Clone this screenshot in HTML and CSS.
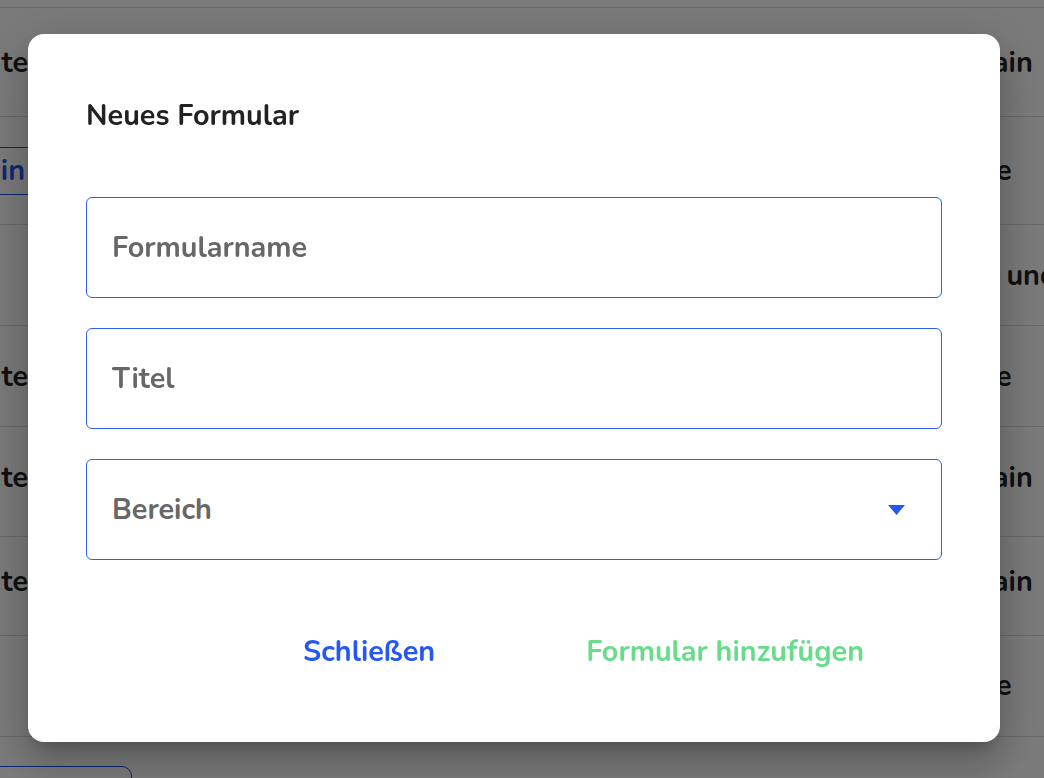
FILE: index.html
```html
<!DOCTYPE html>
<html lang="de">
<head>
<meta charset="utf-8">
<title>Neues Formular</title>
<link rel="stylesheet" href="styles.css">
</head>
<body>
<div class="page">
  <div class="table">
    <div class="row row-top"></div>
    <div class="row r1"><div class="c-left"><span>Komponente</span></div><div></div><div class="c-right">Domain</div></div>
    <div class="row r2"><div class="c-left"><span class="chip">Domain</span></div><div></div><div class="c-right">Ebene</div></div>
    <div class="row r3"><div class="c-left"></div><div></div><div class="c-right">Links und Texte</div></div>
    <div class="row r4"><div class="c-left"><span>Komponente</span></div><div></div><div class="c-right">Ebene</div></div>
    <div class="row r5"><div class="c-left"><span>Komponente</span></div><div></div><div class="c-right">Domain</div></div>
    <div class="row r6"><div class="c-left"><span>Komponente</span></div><div></div><div class="c-right">Domain</div></div>
    <div class="row r7"><div class="c-left"></div><div></div><div class="c-right">Ebene</div></div>
    <div class="row r8"><button class="page-btn">Neues Formular</button></div>
  </div>
</div>

<div class="overlay">
  <div class="dialog">
    <h2 class="dialog-title">Neues Formular</h2>
    <div class="fields">
      <input class="field" type="text" placeholder="Formularname">
      <input class="field" type="text" placeholder="Titel">
      <div class="field select">
        <span class="select-placeholder">Bereich</span>
        <svg class="caret" width="17" height="10" viewBox="0 0 17 10"><path d="M0 0 L17 0 L8.5 10 Z" fill="#2557f5"/></svg>
      </div>
    </div>
    <div class="actions">
      <button class="btn btn-close">Schließen</button>
      <button class="btn btn-add">Formular hinzufügen</button>
    </div>
  </div>
</div>
</body>
</html>
```

FILE: styles.css
```css
* { box-sizing: border-box; }

html, body {
  margin: 0;
  padding: 0;
  height: 100%;
  overflow: hidden;
}

body {
  background: #ffffff;
  font-family: "Nunito", "Open Sans", "Noto Sans", sans-serif;
  color: #222222;
}

/* ---------- background page ---------- */
.table {
  display: flex;
  flex-direction: column;
}

.row {
  display: grid;
  grid-template-columns: 28px 1fr 115px;
  align-items: center;
  border-top: 1px solid #dcdcdc;
  font-size: 28.8px;
  font-weight: 700;
  white-space: nowrap;
}

.row-top { height: 7px; border-top: none; }
.r1 { height: 109px; }
.r2 { height: 108px; }
.r3 { height: 101px; }
.r4 { height: 101px; }
.r5 { height: 110px; padding-bottom: 9px; }
.r6 { height: 99px; padding-bottom: 9px; }
.r7 { height: 101px; padding-bottom: 2px; }
.r8 { height: 80px; display: block; padding-top: 29px; }

.c-left {
  display: flex;
  justify-content: flex-end;
}

.c-right {
  overflow: visible;
}

.chip {
  display: inline-flex;
  align-items: center;
  height: 48px;
  padding: 0 16px;
  margin-right: -14px;
  border: 1px solid #1b55f0;
  border-radius: 6px;
  color: #1b55f0;
}

.page-btn {
  margin-left: -24px;
  width: 156px;
  height: 48px;
  border: 1px solid #1b55f0;
  border-radius: 10px;
  background: #ffffff;
  color: #1b55f0;
  font: inherit;
  font-size: 20px;
}

/* ---------- overlay + dialog ---------- */
.overlay {
  position: fixed;
  inset: 0;
  background: rgba(0, 0, 0, 0.52);
  display: flex;
  align-items: center;
  justify-content: center;
  padding: 0 16px 2px 0;
}

.dialog {
  width: 972px;
  height: 708px;
  background: #ffffff;
  border-radius: 16px;
  padding: 64px 58px 62px;
  display: flex;
  flex-direction: column;
  box-shadow: 0 11px 15px -7px rgba(0,0,0,.2), 0 24px 38px 3px rgba(0,0,0,.14), 0 9px 46px 8px rgba(0,0,0,.12);
}

.dialog-title {
  margin: 0 0 63px;
  font-size: 28.8px;
  line-height: 36px;
  font-weight: 700;
  color: #222222;
}

.fields {
  display: flex;
  flex-direction: column;
  gap: 30px;
}

.field {
  display: flex;
  align-items: center;
  width: 100%;
  height: 101px;
  padding: 0 36px 0 25px;
  border: 1px solid #2f5ff0;
  border-radius: 6px;
  background: #ffffff;
  font: inherit;
  font-size: 28.8px;
  font-weight: 700;
  color: #222;
  outline: none;
}

.field::placeholder {
  color: #676767;
  opacity: 1;
}

.select {
  justify-content: space-between;
}

.select-placeholder {
  color: #676767;
}

.caret {
  display: block;
}

.actions {
  margin-top: 64px;
  display: flex;
  justify-content: flex-end;
  gap: 119px;
  padding-right: 62px;
}

.btn {
  height: 56px;
  padding: 0 16px;
  border: none;
  background: transparent;
  font: inherit;
  font-size: 28.8px;
  font-weight: 700;
  line-height: 56px;
  cursor: pointer;
}

.btn-close { color: #2557f5; }
.btn-add { color: #68dc8a; }
```
